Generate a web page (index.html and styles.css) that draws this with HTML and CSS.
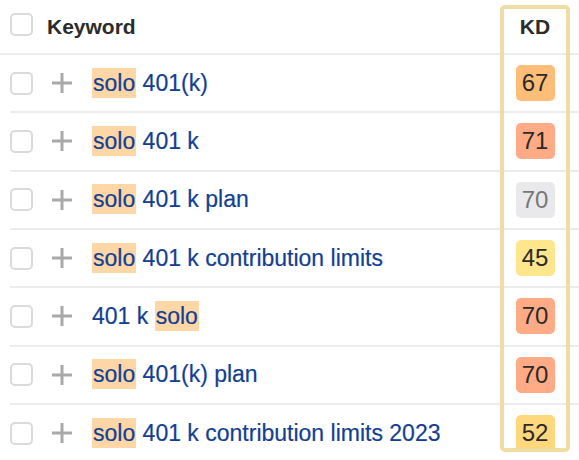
FILE: index.html
```html
<!DOCTYPE html>
<html lang="en">
<head>
<meta charset="utf-8">
<title>Keywords</title>
<link rel="stylesheet" href="styles.css">
</head>
<body>
<div class="table">
  <div class="kd-frame"></div>
  <div class="head">
    <span class="check"></span>
    <span class="head-kw">Keyword</span>
    <span class="head-kd">KD</span>
  </div>

  <div class="row">
    <span class="check"></span>
    <svg class="plus" viewBox="0 0 20 20"><path d="M10 0v20M0 10h20"/></svg>
    <span class="kw"><span class="hl">solo</span> 401(k)</span>
    <span class="kd"><span class="badge b-orange">67</span></span>
  </div>
  <div class="row">
    <span class="check"></span>
    <svg class="plus" viewBox="0 0 20 20"><path d="M10 0v20M0 10h20"/></svg>
    <span class="kw"><span class="hl">solo</span> 401 k</span>
    <span class="kd"><span class="badge b-salmon">71</span></span>
  </div>
  <div class="row">
    <span class="check"></span>
    <svg class="plus" viewBox="0 0 20 20"><path d="M10 0v20M0 10h20"/></svg>
    <span class="kw"><span class="hl">solo</span> 401 k plan</span>
    <span class="kd"><span class="badge b-gray">70</span></span>
  </div>
  <div class="row">
    <span class="check"></span>
    <svg class="plus" viewBox="0 0 20 20"><path d="M10 0v20M0 10h20"/></svg>
    <span class="kw"><span class="hl">solo</span> 401 k contribution limits</span>
    <span class="kd"><span class="badge b-yellow">45</span></span>
  </div>
  <div class="row">
    <span class="check"></span>
    <svg class="plus" viewBox="0 0 20 20"><path d="M10 0v20M0 10h20"/></svg>
    <span class="kw">401 k <span class="hl">solo</span></span>
    <span class="kd"><span class="badge b-salmon">70</span></span>
  </div>
  <div class="row">
    <span class="check"></span>
    <svg class="plus" viewBox="0 0 20 20"><path d="M10 0v20M0 10h20"/></svg>
    <span class="kw"><span class="hl">solo</span> 401(k) plan</span>
    <span class="kd"><span class="badge b-salmon">70</span></span>
  </div>
  <div class="row last">
    <span class="check"></span>
    <svg class="plus" viewBox="0 0 20 20"><path d="M10 0v20M0 10h20"/></svg>
    <span class="kw"><span class="hl">solo</span> 401 k contribution limits 2023</span>
    <span class="kd"><span class="badge b-gold">52</span></span>
  </div>
</div>
</body>
</html>
```

FILE: styles.css
```css
html, body {
  margin: 0;
  padding: 0;
  background: #ffffff;
}

body {
  font-family: "Liberation Sans", Arial, Helvetica, sans-serif;
  color: #333333;
  width: 579px;
  height: 460px;
  overflow: hidden;
}

.table {
  position: relative;
  width: 579px;
}

.kd-frame {
  position: absolute;
  left: 500px;
  top: 5px;
  width: 62px;
  height: 439px;
  border: 4px solid #f0dda3;
  border-radius: 5px;
  z-index: 2;
  pointer-events: none;
}

.head {
  display: flex;
  align-items: center;
  height: 53px;
  padding-left: 10px;
  border-bottom: 2px solid #ececec;
}

.head .check {
  margin-top: -5px;
}

.check {
  flex: none;
  box-sizing: border-box;
  width: 23px;
  height: 23px;
  border: 2px solid #dadada;
  border-radius: 5px;
  background: #fff;
}

.head-kw {
  flex: 1;
  margin-left: 14px;
  font-size: 21px;
  font-weight: bold;
  color: #2b2b2b;
}

.head-kd {
  width: 70px;
  margin-right: 9px;
  text-align: center;
  font-size: 21px;
  font-weight: bold;
  color: #2b2b2b;
}

.row {
  display: flex;
  align-items: center;
  height: 56.33px;
  margin-left: 10px;
  border-bottom: 2px solid #ececec;
}

.row.last {
  border-bottom: none;
}

.plus {
  flex: none;
  width: 20px;
  height: 20px;
  margin-left: 19px;
  stroke: #a9a9a9;
  stroke-width: 3;
  fill: none;
}

.kw {
  flex: 1;
  margin-left: 20px;
  font-size: 23px;
  color: #123f93;
  white-space: nowrap;
  -webkit-text-stroke: 0.2px #123f93;
}

.hl {
  background: #ffd6a6;
  padding: 2px 1px;
}

.kd {
  flex: none;
  width: 70px;
  margin-right: 9px;
  display: flex;
  justify-content: center;
}

.badge {
  width: 39px;
  height: 36px;
  border-radius: 5px;
  display: flex;
  align-items: center;
  justify-content: center;
  font-size: 24px;
  color: #2a2a2a;
}

.b-orange { background: #ffbe78; }
.b-salmon { background: #ffab86; }
.b-gray { background: #e9e9eb; color: #777777; }
.b-yellow { background: #fde68b; }
.b-gold { background: #ffd77c; }
```
